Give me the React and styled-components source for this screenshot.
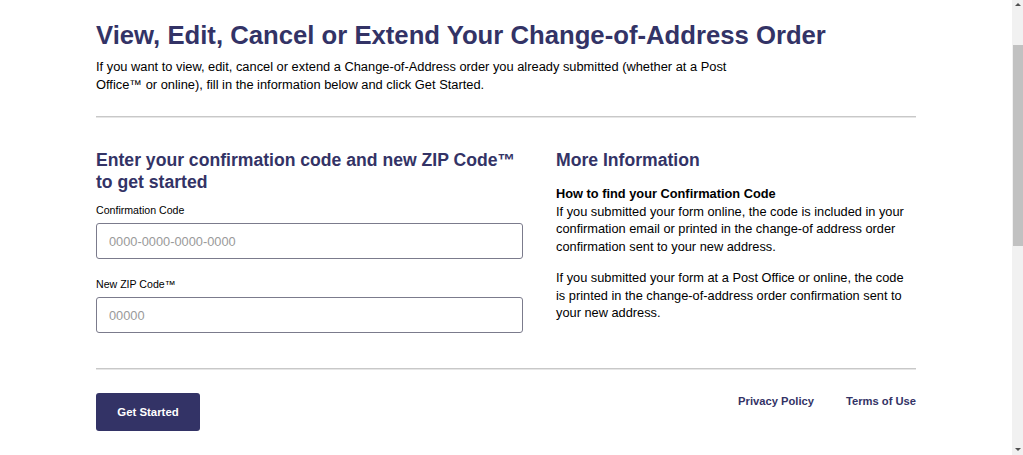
import React from 'react';
import styled, { createGlobalStyle } from 'styled-components';

const GlobalStyle = createGlobalStyle`
  html, body {
    margin: 0;
    padding: 0;
    background: #fff;
    overflow: hidden;
  }
  body {
    font-family: "Liberation Sans", Arial, sans-serif;
    color: #000;
  }
`;

const Frame = styled.div`
  display: flex;
  width: 1023px;
  height: 455px;
  overflow: hidden;
`;

const Main = styled.main`
  flex: 1;
  display: flex;
  justify-content: center;
`;

const Container = styled.div`
  width: 820px;
  padding-top: 18px;
`;

const Title = styled.h1`
  margin: 0;
  font-size: 25.7px;
  line-height: 34px;
  font-weight: 700;
  color: #333366;
`;

const Intro = styled.p`
  margin: 6px 0 0;
  max-width: 660px;
  font-size: 12.85px;
  line-height: 17.5px;
`;

const Rule = styled.hr`
  margin: ${(p) => p.$margin || '0'};
  border: 0;
  border-top: 1px solid #c8c8c8;
  border-bottom: 1px solid #e6e6e6;
  height: 0;
`;

const Columns = styled.div`
  display: grid;
  grid-template-columns: 427px 1fr;
  column-gap: 33px;
  padding-top: 31px;
  padding-bottom: 35px;
`;

const Column = styled.section`
  display: flex;
  flex-direction: column;
`;

const SectionTitle = styled.h2`
  margin: 0;
  font-size: 17.6px;
  line-height: 22px;
  font-weight: 700;
  color: #333366;
  white-space: nowrap;
`;

const Field = styled.div`
  display: flex;
  flex-direction: column;
  margin-top: ${(p) => p.$top}px;
`;

const Label = styled.label`
  font-size: 10.6px;
  line-height: 14px;
  color: #000;
`;

const Input = styled.input`
  box-sizing: border-box;
  margin-top: 6px;
  width: 100%;
  height: 36px;
  padding: 0 12px;
  border: 1px solid #7b7b8c;
  border-radius: 3px;
  font-family: "Liberation Sans", Arial, sans-serif;
  font-size: 12.8px;
  color: #000;
  &::placeholder {
    color: #9a9a9a;
  }
`;

const InfoBlock = styled.div`
  margin-top: 14px;
  font-size: 12.8px;
  line-height: 17.7px;
`;

const InfoHeading = styled.div`
  font-weight: 700;
`;

const InfoText = styled.p`
  margin: ${(p) => p.$top || 0}px 0 0;
`;

const Footer = styled.div`
  display: flex;
  justify-content: space-between;
  align-items: flex-start;
  padding-top: 23px;
`;

const Button = styled.button`
  width: 104px;
  height: 38px;
  border: 0;
  border-radius: 3px;
  background: #333366;
  color: #fff;
  font-family: "Liberation Sans", Arial, sans-serif;
  font-size: 11.4px;
  font-weight: 700;
  cursor: pointer;
`;

const Links = styled.nav`
  display: flex;
  gap: 32px;
  padding-top: 1px;
`;

const FooterLink = styled.a`
  font-size: 11.2px;
  line-height: 14px;
  font-weight: 700;
  color: #333366;
  text-decoration: none;
`;

const Scrollbar = styled.div`
  width: 11px;
  height: 455px;
  background: #f1f1f1;
  display: flex;
  flex-direction: column;
  align-items: center;
`;

const Arrow = styled.div`
  width: 0;
  height: 0;
  border-left: 3px solid transparent;
  border-right: 3px solid transparent;
  ${(p) => (p.$down ? 'border-top: 3px solid #505050;' : 'border-bottom: 3px solid #505050;')}
  margin: ${(p) => (p.$down ? 'auto 0 4px' : '3px 0 0')};
`;

const Thumb = styled.div`
  margin-top: 39px;
  width: 10px;
  margin-left: 1px;
  height: 201px;
  background: #c1c1c1;
`;

export default function App() {
  return (
    <>
      <GlobalStyle />
      <Frame>
        <Main>
          <Container>
            <Title>View, Edit, Cancel or Extend Your Change-of-Address Order</Title>
            <Intro>
              If you want to view, edit, cancel or extend a Change-of-Address order you already
              submitted (whether at a Post Office™ or online), fill in the information below and
              click Get Started.
            </Intro>
            <Rule $margin="23px 0 0" />
            <Columns>
              <Column>
                <SectionTitle>
                  Enter your confirmation code and new ZIP Code™
                  <br />
                  to get started
                </SectionTitle>
                <Field $top={10}>
                  <Label>Confirmation Code</Label>
                  <Input placeholder="0000-0000-0000-0000" />
                </Field>
                <Field $top={18}>
                  <Label>New ZIP Code™</Label>
                  <Input placeholder="00000" />
                </Field>
              </Column>
              <Column>
                <SectionTitle>More Information</SectionTitle>
                <InfoBlock>
                  <InfoHeading>How to find your Confirmation Code</InfoHeading>
                  <InfoText>
                    If you submitted your form online, the code is included in your confirmation
                    email or printed in the change-of address order confirmation sent to your new
                    address.
                  </InfoText>
                  <InfoText $top={13}>
                    If you submitted your form at a Post Office or online, the code is printed in
                    the change-of-address order confirmation sent to your new address.
                  </InfoText>
                </InfoBlock>
              </Column>
            </Columns>
            <Rule />
            <Footer>
              <Button>Get Started</Button>
              <Links>
                <FooterLink href="#">Privacy Policy</FooterLink>
                <FooterLink href="#">Terms of Use</FooterLink>
              </Links>
            </Footer>
          </Container>
        </Main>
        <Scrollbar>
          <Arrow />
          <Thumb />
          <Arrow $down />
        </Scrollbar>
      </Frame>
    </>
  );
}
